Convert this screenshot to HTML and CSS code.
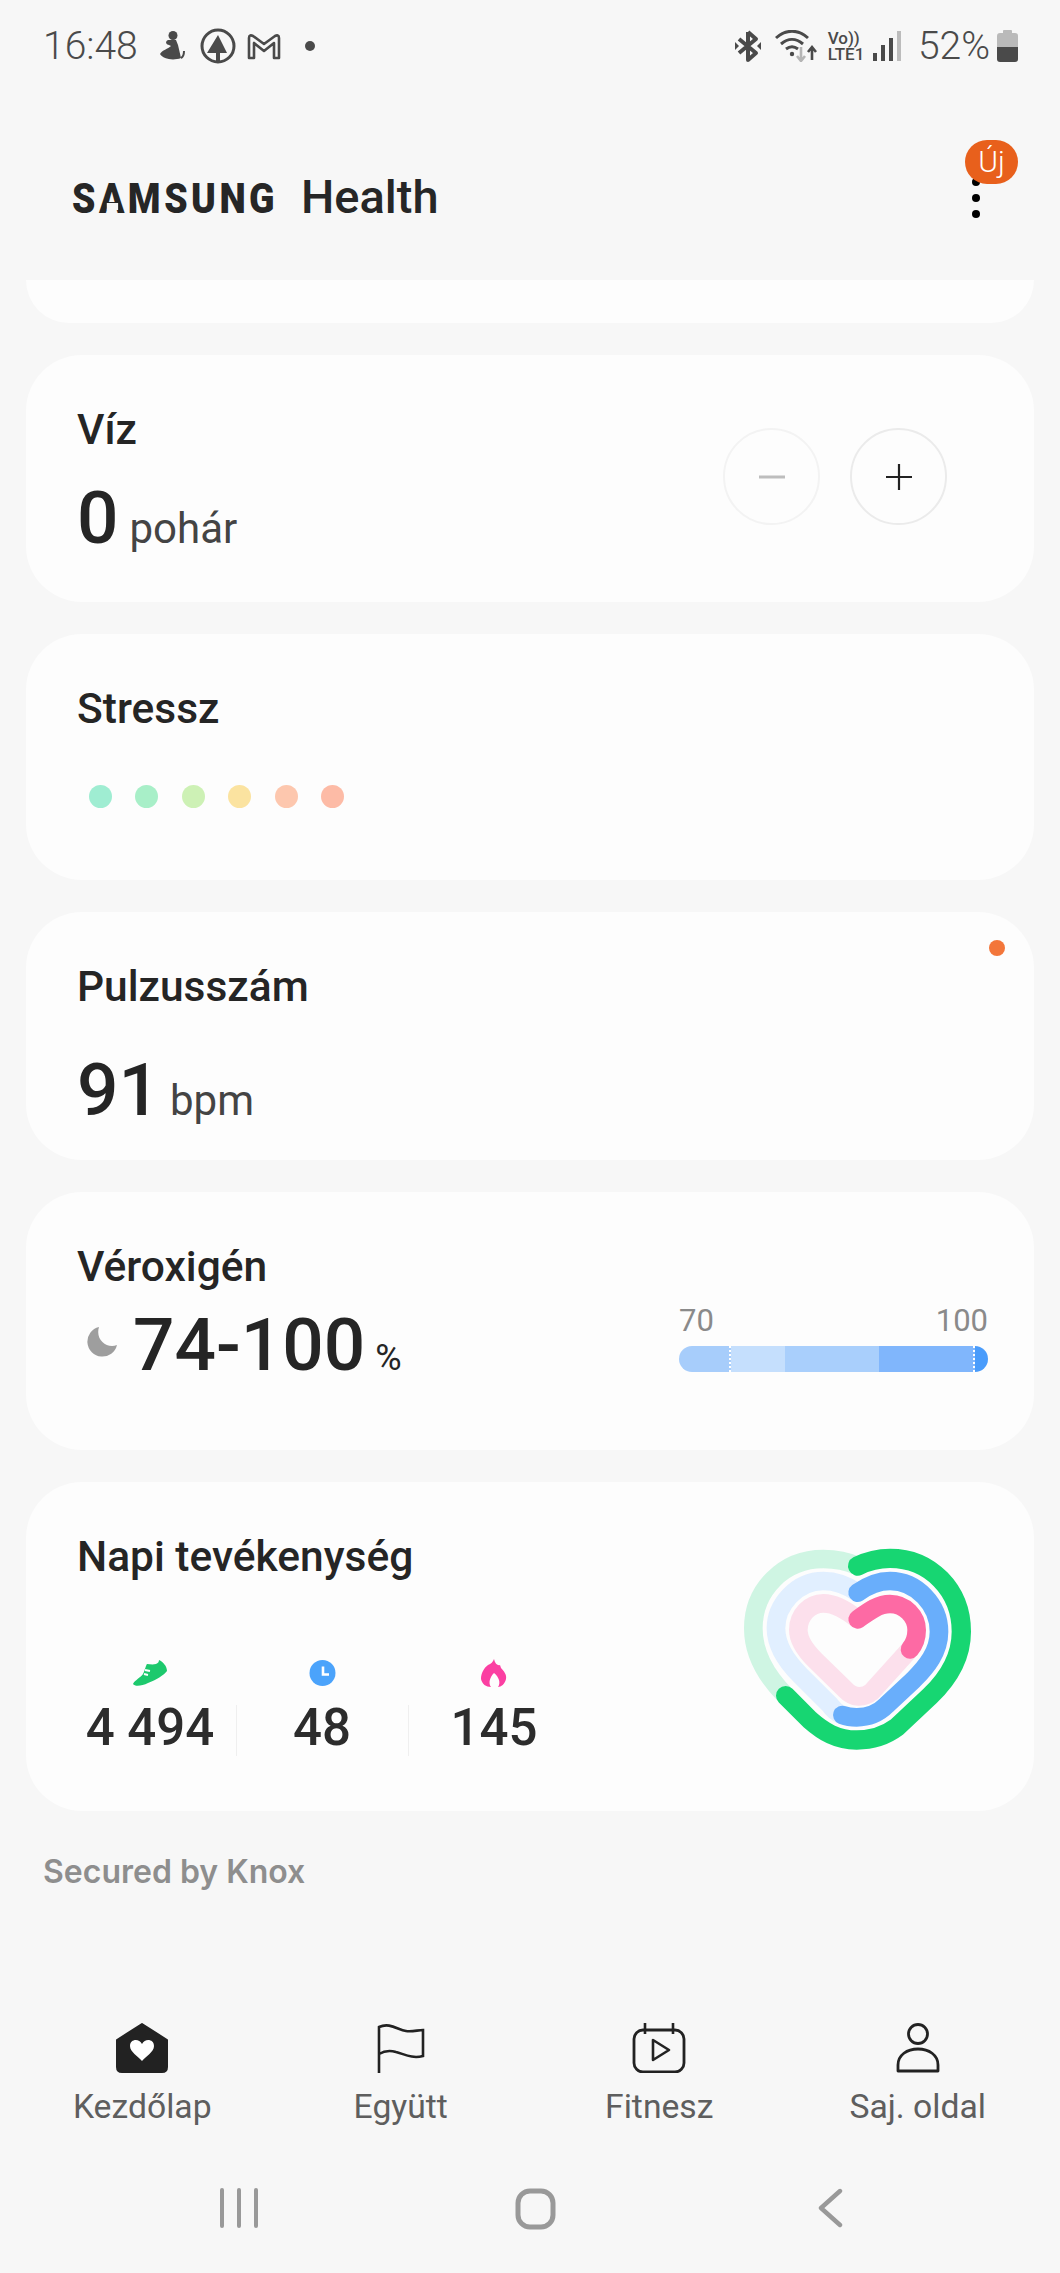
FILE: index.html
```html
<!DOCTYPE html>
<html>
	<head>
		<meta charset="utf-8">
		<title>Samsung Health</title>
		<link rel="stylesheet" href="styles.css">
	</head>
	<body>
		<div id="phone">
			<div class="status">
				<span class="time">16:48</span>
				<svg class="st-person" width="27" height="30" viewBox="0 0 27 30"><circle cx="14" cy="4.5" r="4.5" fill="#4a4a4a"/><path d="M9 9C5 11 8 14 10 14L12 15C9 18 3 19 1 23C4 28 14 30 22 27L19 14L17 9Z" fill="#4a4a4a"/><path d="M22 27C24 26 25 24 25 20" fill="none" stroke="#4a4a4a" stroke-width="2"/></svg>
				<svg class="st-tree" width="36" height="36" viewBox="0 0 36 36"><circle cx="18" cy="18" r="16" fill="none" stroke="#4a4a4a" stroke-width="3"/><path d="M18 7L27 25H20V33H16V25H7Z" fill="#4a4a4a"/></svg>
				<svg class="st-mail" width="34" height="27" viewBox="0 0 34 27"><path d="M2 5C2 2 4 2 6 3L17 11L28 3C30 2 32 2 32 5V25H27V10L17 18L7 10V25H2Z" fill="none" stroke="#4a4a4a" stroke-width="2.6" stroke-linejoin="round"/></svg>
				<span class="st-dot"></span>
				<span class="st-fill"></span>
				<svg class="st-bt" width="28" height="32" viewBox="0 0 28 32"><path d="M14 2V30L22 23L5 9M14 2L22 9L5 23" fill="none" stroke="#4a4a4a" stroke-width="4" stroke-linejoin="round"/><path d="M1 12L5 16L1 20ZM27 12L23 16L27 20Z" fill="#4a4a4a"/></svg>
				<svg class="st-wifi" width="42" height="32" viewBox="0 0 42 32"><path d="M1 8C11 -1 23 -1 33 8M6 14C13 8 21 8 28 14M11 19C15 16 19 16 23 19" fill="none" stroke="#4a4a4a" stroke-width="3"/><circle cx="17" cy="24" r="2.2" fill="#4a4a4a"/><path d="M26 17V30M22 26L26 31L30 26" fill="none" stroke="#b5b5b5" stroke-width="2.6"/><path d="M37 30V18M33 22L37 17L41 22" fill="none" stroke="#4a4a4a" stroke-width="2.6"/></svg>
				<div class="st-lte"><span>Vo))</span><span>LTE1</span></div>
				<div class="st-signal"><i class="s1"></i><i class="s2"></i><i class="s3"></i><i class="s4"></i></div>
				<span class="batt-text">52%</span>
				<svg class="batt" width="21" height="32" viewBox="0 0 21 32"><path d="M6 3V1C6 .5 6.500 0 7 0H14C14.500 0 15 .5 15 1V3H18C20 3 21 4 21 6V17H0V6C0 4 1 3 3 3Z" fill="#bababa"/><path d="M0 17H21V29C21 31 20 32 18 32H3C1 32 0 31 0 29Z" fill="#4a4a4a"/></svg>
			</div>

			<div class="appbar">
				<div class="logo"><span class="wordmark">S<span class="lam">A</span>MSUNG</span><span class="health">Health</span></div>
				<div class="more">
					<span class="badge">Új</span>
					<i></i><i></i><i></i>
				</div>
			</div>

			<div class="cards">
				<div class="card stub"></div>

				<div class="card water">
					<div>
						<div class="title">Víz</div>
						<div class="value"><b>0</b><span class="unit tight">pohár</span></div>
					</div>
					<div class="btns">
						<div class="btn off"><svg width="28" height="28" viewBox="0 0 28 28"><path d="M1 14H27" stroke="#bdbdbd" stroke-width="3"/></svg></div>
						<div class="btn"><svg width="28" height="28" viewBox="0 0 28 28"><path d="M1 14H27M14 1V27" stroke="#222" stroke-width="2.2"/></svg></div>
					</div>
				</div>

				<div class="card stress">
					<div class="title">Stressz</div>
					<div class="dots">
						<i class="d1"></i><i class="d2"></i><i class="d3"></i><i class="d4"></i><i class="d5"></i><i class="d6"></i>
					</div>
				</div>

				<div class="card pulse">
					<span class="new"></span>
					<div class="title">Pulzusszám</div>
					<div class="value"><b>91</b><span class="unit">bpm</span></div>
				</div>

				<div class="card oxygen">
					<div>
						<div class="title">Véroxigén</div>
						<div class="value">
							<svg class="moon" width="30" height="30" viewBox="0 0 30 30"><path d="M12 0A15 15 0 1 0 30 18C20 22 8 13 12 0Z" fill="#9e9e9e"/></svg>
							<b>74-100</b><span class="pct">%</span>
						</div>
					</div>
					<div class="range">
						<div class="range-lbl"><span>70</span><span>100</span></div>
						<div class="range-bar">
							<i class="r1"></i><i class="r2"></i><i class="r3"></i><i class="r4"></i><i class="r5"></i>
						</div>
					</div>
				</div>

				<div class="card activity">
					<div>
						<div class="title">Napi tevékenység</div>
						<div class="stats">
							<div class="stat">
								<svg width="36" height="28" viewBox="0 0 36 28"><path d="M1 25C3 21 8 19 11 15C13 11 14 6 15 5C18 5 20 6 24 5C26 4 27 3 27 1C31 3 35 7 35 12C32 16 24 21 16 24C10 27 3 28 1 25Z" fill="#1dc96d"/><path d="M13 11L18 12M12 15L16 16" stroke="#fff" stroke-width="2"/></svg>
								<b>4 494</b>
							</div>
							<div class="stat">
								<svg width="27" height="28" viewBox="0 0 27 27"><circle cx="13.5" cy="13.500" r="13" fill="#4ba3fb"/><path d="M14 7V15H20" fill="none" stroke="#fff" stroke-width="2.6"/></svg>
								<b>48</b>
							</div>
							<div class="stat">
								<svg width="26" height="28" viewBox="0 0 26 28"><path d="M13 0C14 5 17 7 19 6L20 9C23 12 26 16 25 20C24 25 20 28 17 28C20 24 18 18 13 14C9 18 7 24 10 28C5 28 1 25 0 20C0 14 3 9 7 6C10 5 12 3 13 0Z" fill="#fb3fa2"/></svg>
								<b>145</b>
							</div>
						</div>
					</div>
					<svg class="rings" width="260" height="240" viewBox="0 0 780 720" fill="none" stroke-linecap="round" stroke-width="56">
						<path stroke="#cff5e3" d="M413 108C380 93 345 87 310 87C190 87 100 180 100 295C100 370 140 440 197 497"/>
						<path stroke="#e1efff" d="M413 188C380 165 345 153 310 153C230 153 168 225 168 295C168 350 200 395 240 435L330 525C340 540 355 550 367 555"/>
						<path stroke="#fce0ec" d="M413 268C385 245 350 220 310 220C270 220 235 255 235 300C235 335 260 365 285 390L375 478C400 505 430 505 455 485L570 358"/>
						<path stroke="#fd6aa4" d="M413 268C445 245 475 222 510 222C555 222 590 260 590 300C590 325 585 340 570 358"/>
						<path stroke="#69aefb" d="M413 188C445 165 475 153 510 153C590 153 657 225 657 305C657 365 620 410 580 450L500 525C475 550 445 562 410 562C395 562 380 560 367 555"/>
						<path stroke="#17d672" stroke-width="58" d="M413 108C445 92 475 85 510 85C630 85 724 180 724 305C724 385 680 450 630 498L530 592C490 622 450 630 410 630C350 630 310 605 270 570L197 497"/>
					</svg>
				</div>
			</div>

			<div class="knox">Secured by Knox</div>

			<div class="tabs">
				<div class="tab">
					<svg width="54" height="50" viewBox="0 0 54 50"><path d="M27 1L52 17V44C52 47 50 49 47 49H7C4 49 2 47 2 44V17Z" fill="#222" stroke="#222" stroke-width="2" stroke-linejoin="round"/><path d="M27 38C23 33 15 29 15 23C15 16 24 15 27 21C30 15 39 16 39 23C39 29 31 33 27 38Z" fill="#fff"/></svg>
					<span>Kezdőlap</span>
				</div>
				<div class="tab">
					<svg width="50" height="50" viewBox="0 0 50 50"><path d="M3 50V4C14 -1 22 7 30 8C36 9 42 7 47 7V33C36 36 28 31 20 29C13 27 8 28 3 31" fill="none" stroke="#222" stroke-width="2.6"/></svg>
					<span>Együtt</span>
				</div>
				<div class="tab">
					<svg width="54" height="50" viewBox="0 0 54 50"><rect x="2" y="7" width="50" height="42" rx="9" fill="none" stroke="#222" stroke-width="2.8"/><path d="M13 0V11M41 0V11" stroke="#222" stroke-width="2.6"/><path d="M21 17V37L37 27Z" fill="none" stroke="#222" stroke-width="2.6" stroke-linejoin="round"/></svg>
					<span>Fitnesz</span>
				</div>
				<div class="tab">
					<svg width="46" height="50" viewBox="0 0 46 50"><circle cx="23" cy="11" r="9.5" fill="none" stroke="#222" stroke-width="2.8"/><path d="M3 48V42C3 32 12 26 23 26C34 26 43 32 43 42V48Z" fill="none" stroke="#222" stroke-width="2.8" stroke-linejoin="round"/></svg>
					<span>Saj. oldal</span>
				</div>
			</div>

			<div class="sysnav">
				<svg width="40" height="40" viewBox="0 0 40 40"><path d="M2 2V38M19 2V38M36 2V38" stroke="#999" stroke-width="4" stroke-linecap="round"/></svg>
				<svg width="42" height="42" viewBox="0 0 42 42"><rect x="3" y="3" width="35" height="36" rx="12" fill="none" stroke="#999" stroke-width="5"/></svg>
				<svg class="back" width="28" height="40" viewBox="0 0 28 40"><path d="M24 3L5 20L24 37" fill="none" stroke="#999" stroke-width="4.4" stroke-linecap="round" stroke-linejoin="round"/></svg>
			</div>
		</div>
	</body>
</html>
```

FILE: styles.css
```css
html,body{
	margin:0;
	padding:0;
	background:#f7f7f7;
}
#phone{
	width:1060px;
	height:2273px;
	display:flex;
	flex-direction:column;
	overflow:hidden;
	font-family:Roboto,"Noto Sans",sans-serif;
	color:#252525;
}

/* status bar */
.status{
	height:92px;
	display:flex;
	align-items:center;
	padding:0 42px 0 43px;
	box-sizing:border-box;
	color:#4a4a4a;
}
.time{
	font-size:39px;
	font-weight:300;
	width:93px;
	margin-right:23px;
}
.st-tree{margin-left:14px;}
.st-mail{margin-left:11px;}
.st-dot{
	width:10px;
	height:10px;
	border-radius:50%;
	background:#4a4a4a;
	margin-left:24px;
}
.st-fill{flex:1;}
.st-wifi{margin-left:13px;}
.st-lte{
	display:flex;
	flex-direction:column;
	margin-left:11px;
	font-weight:500;
	font-size:17px;
	line-height:16px;
}
.st-signal{
	display:flex;
	align-items:flex-end;
	gap:4.5px;
	height:30px;
	margin-left:9px;
}
.st-signal i{
	display:block;
	width:3.5px;
	background:#4a4a4a;
}
.st-signal .s1{height:8px;}
.st-signal .s2{height:16px;}
.st-signal .s3{height:23px;}
.st-signal .s4{height:30px;background:#bcbcbc;}
.batt-text{
	font-size:39px;
	font-weight:300;
	margin-left:17px;
}
.batt{margin-left:7px;}

/* app bar */
.appbar{
	height:188px;
	display:flex;
	justify-content:space-between;
	padding:0 46px 0 72px;
	box-sizing:border-box;
	position:relative;
}
.logo{
	display:flex;
	align-items:baseline;
	padding-top:79px;
	color:#262626;
}
.wordmark{
	display:block;
	width:205px;
	white-space:nowrap;
	font-weight:900;
	font-size:43px;
	letter-spacing:4px;
	line-height:52px;
	transform:scaleX(.87);
	transform-origin:left;
}
.lam{position:relative;}
.lam:after{
	content:'';
	position:absolute;
	left:9px;
	width:13px;
	top:30px;
	height:7px;
	background:#f7f7f7;
}
.health{
	font-weight:500;
	font-size:47px;
	line-height:52px;
	margin-left:24px;
}
.more{
	width:42px;
	padding-top:86px;
	display:flex;
	flex-direction:column;
	gap:8px;
	position:relative;
}
.more i{
	display:block;
	width:8px;
	height:8px;
	border-radius:50%;
	background:#000;
}
.badge{
	position:absolute;
	left:-7px;
	top:48px;
	width:53px;
	height:44px;
	border-radius:22px;
	background:#e8601c;
	color:#fff;
	font-size:30px;
	font-weight:300;
	line-height:44px;
	text-align:center;
}

/* cards */
.cards{
	display:flex;
	flex-direction:column;
	gap:32px;
	padding:0 26px;
}
.card{
	background:#fdfdfd;
	border-radius:56px;
	padding:52px 51px 0;
	box-sizing:border-box;
	position:relative;
	display:flex;
	justify-content:space-between;
}
.stub{
	height:43px;
	border-radius:0 0 56px 56px;
	padding:0;
}
.water{height:247px;}
.stress{height:246px;display:block;}
.pulse{height:248px;display:block;}
.oxygen{height:258px;}
.activity{height:329px;}
.title{
	font-size:42.5px;
	font-weight:500;
	line-height:46px;
}
.value{
	display:flex;
	align-items:baseline;
	line-height:72px;
	margin-top:29px;
}
.value b{
	font-size:73px;
	font-weight:500;
}
.unit{
	font-size:42px;
	color:#444;
	margin-left:10px;
}
.unit.tight{margin-left:11px;}
.pulse .value{margin-top:44px;}

.btns{
	display:flex;
	gap:30px;
	margin:21px 36px 0 0;
}
.btn{
	width:97px;
	height:97px;
	border:2px solid #ebebeb;
	border-radius:50%;
	box-sizing:border-box;
	display:flex;
	align-items:center;
	justify-content:center;
}
.btn.off{border-color:#f3f3f3;}

.dots{
	display:flex;
	gap:23.4px;
	margin:53px 0 0 12px;
}
.dots i{
	display:block;
	width:23px;
	height:23px;
	border-radius:50%;
}
.d1{background:#9fedd2;}
.d2{background:#a8efc8;}
.d3{background:#cdf1b5;}
.d4{background:#fbe3a0;}
.d5{background:#fdc7ae;}
.d6{background:#fdbba6;}

.new{
	position:absolute;
	right:29px;
	top:28px;
	width:16px;
	height:16px;
	border-radius:50%;
	background:#f3763a;
}

.oxygen .value{margin-top:19px;}
.moon{
	margin:0 16px 0 10px;
	transform:translateY(-13px);
}
.pct{
	font-size:36px;
	margin-left:10px;
}
.range{
	width:309px;
	margin:59px -5px 0 0;
}
.range-lbl{
	display:flex;
	justify-content:space-between;
	font-size:31px;
	line-height:36px;
	color:#8a8a8a;
}
.range-bar{
	display:flex;
	height:26px;
	margin-top:7px;
	border-radius:13px;
	overflow:hidden;
}
.range-bar i{display:block;}
.r1{width:50px;background:#a7cdfb;border-right:2px dotted #fff;}
.r2{width:55px;background:#c5dffd;}
.r3{width:94px;background:#a9cffc;}
.r4{width:95px;background:#80b6fc;border-right:2px dotted #fff;}
.r5{width:13px;background:#4a9cfb;}

.stats{
	display:flex;
	margin:79px 0 0 -13px;
}
.stat{
	width:172px;
	display:flex;
	flex-direction:column;
	align-items:center;
	position:relative;
}
.stat svg{flex:none;}
.stat b{
	font-size:51px;
	font-weight:500;
	line-height:60px;
	margin-top:11px;
	color:#2c2c2c;
}
.stat + .stat:before{
	content:'';
	position:absolute;
	left:0;
	top:46px;
	height:51px;
	width:1px;
	background:#efefef;
}
.rings{
	margin:-4px 3px 0 0;
}

.knox{
	font-family:Inter,sans-serif;
	font-weight:600;
	font-size:32px;
	letter-spacing:0;
	color:#8e8e8e;
	padding:41px 0 0 43px;
	line-height:40px;
}

.tabs{
	margin-top:auto;
	display:grid;
	grid-template-columns:repeat(4,1fr);
	padding:0 13px;
}
.tab{
	display:flex;
	flex-direction:column;
	align-items:center;
	font-size:33.7px;
	color:#5e5e5e;
	line-height:40px;
	gap:14px;
}
.sysnav{
	height:113px;
	margin-top:33px;
	padding:28px 0 0 4px;
	box-sizing:border-box;
	display:flex;
	align-items:flex-start;
	justify-content:center;
	gap:255px;
}
.back{margin-left:4px;}
```
